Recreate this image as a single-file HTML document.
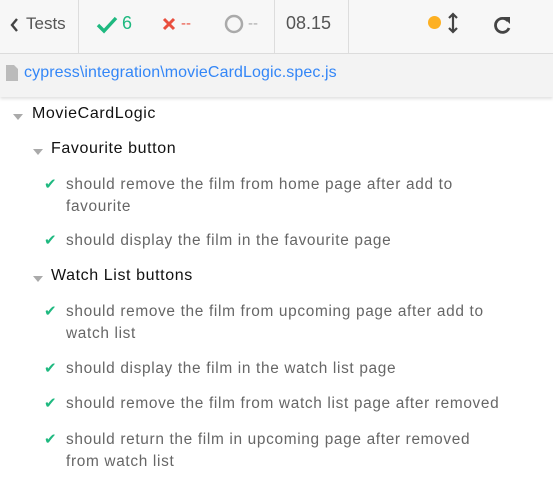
<!DOCTYPE html>
<html><head><style>
body{margin:0;width:553px;height:478px;background:#fff;font-family:"Liberation Sans",sans-serif;overflow:hidden;position:relative}
.hdr{position:absolute;left:0;top:0;width:553px;height:53px;background:#f7f7f7;border-bottom:1px solid #ddd}
.div{position:absolute;top:0;height:53px;width:1px;background:#ddd}
.t{position:absolute;white-space:nowrap}
.spec{position:absolute;left:0;top:54px;width:553px;height:43px;background:#f3f3f3;box-shadow:0 2px 3px rgba(0,0,0,.12)}
.row{position:absolute;white-space:nowrap;font-size:15.4px;color:#666;line-height:22px;letter-spacing:.67px}
.chk{position:absolute;left:44px;color:#1fb980;font-size:15px}
.tri{position:absolute;width:0;height:0;border-left:5px solid transparent;border-right:5px solid transparent;border-top:6px solid #aaa}
.suite{position:absolute;font-size:16px;color:#111;white-space:nowrap;letter-spacing:.6px}
</style></head><body>
<div class="hdr">
<svg class="t" style="left:9px;top:17px" width="10" height="16" viewBox="0 0 10 16"><path d="M8 2L3 8l5 6" stroke="#444" stroke-width="2.4" fill="none"/></svg>
<div class="t" style="left:26px;top:14px;font-size:17px;color:#555">Tests</div>
<div class="div" style="left:78px"></div>
<svg class="t" style="left:96px;top:16px" width="22" height="18" viewBox="0 0 22 18"><path d="M2 9l6 6L20 2" stroke="#1fb980" stroke-width="3.4" fill="none"/></svg>
<div class="t" style="left:122px;top:13px;font-size:18px;color:#1fb980">6</div>
<svg class="t" style="left:162px;top:17px" width="14" height="14" viewBox="0 0 14 14"><path d="M2 2l10 10M12 2L2 12" stroke="#e94f3e" stroke-width="3"/></svg>
<div class="t" style="left:181px;top:15px;font-size:15px;color:#e94f3e">--</div>
<svg class="t" style="left:224px;top:14px" width="20" height="20"><circle cx="10" cy="10" r="8" stroke="#aaa" stroke-width="2.5" fill="none"/></svg>
<div class="t" style="left:248px;top:15px;font-size:15px;color:#aaa">--</div>
<div class="div" style="left:274px"></div>
<div class="t" style="left:286px;top:13px;font-size:18px;color:#555">08.15</div>
<div class="div" style="left:348px"></div>
<div class="t" style="left:428px;top:16px;width:13px;height:13px;border-radius:50%;background:#fdb022"></div>
<svg class="t" style="left:448px;top:12px" width="10" height="22" viewBox="0 0 10 22"><path d="M5 3v16M1 6l4-4 4 4M1 16l4 4 4-4" stroke="#444" stroke-width="2.2" fill="none"/></svg>
<svg class="t" style="left:492px;top:13px" width="22" height="22" viewBox="0 0 22 22"><path d="M16 8A7 7 0 1 0 17 15" stroke="#444" stroke-width="2.8" fill="none"/><path d="M11 4h7v7z" fill="#444"/></svg>
</div>
<div class="spec">
<svg class="t" style="left:6px;top:11px" width="12" height="16"><path d="M0 0h8l4 4v12H0z" fill="#bbb"/></svg>
<div class="t" style="left:24px;top:10px;font-size:16px;color:#3386f7;letter-spacing:.1px">cypress\integration\movieCardLogic.spec.js</div>
</div>
<div class="tri" style="left:13px;top:114px"></div>
<div class="suite" style="left:32px;top:105px">MovieCardLogic</div>
<div class="tri" style="left:33px;top:149px"></div>
<div class="suite" style="left:51px;top:140px">Favourite button</div>
<div class="chk" style="top:175px">✔</div>
<div class="row" style="left:66px;top:174px">should remove the film from home page after add to<br>favourite</div>
<div class="chk" style="top:231px">✔</div>
<div class="row" style="left:66px;top:230px">should display the film in the favourite page</div>
<div class="tri" style="left:33px;top:276px"></div>
<div class="suite" style="left:51px;top:267px">Watch List buttons</div>
<div class="chk" style="top:302px">✔</div>
<div class="row" style="left:66px;top:301px">should remove the film from upcoming page after add to<br>watch list</div>
<div class="chk" style="top:359px">✔</div>
<div class="row" style="left:66px;top:358px">should display the film in the watch list page</div>
<div class="chk" style="top:394px">✔</div>
<div class="row" style="left:66px;top:393px">should remove the film from watch list page after removed</div>
<div class="chk" style="top:430px">✔</div>
<div class="row" style="left:66px;top:429px">should return the film in upcoming page after removed<br>from watch list</div>
</body></html>
